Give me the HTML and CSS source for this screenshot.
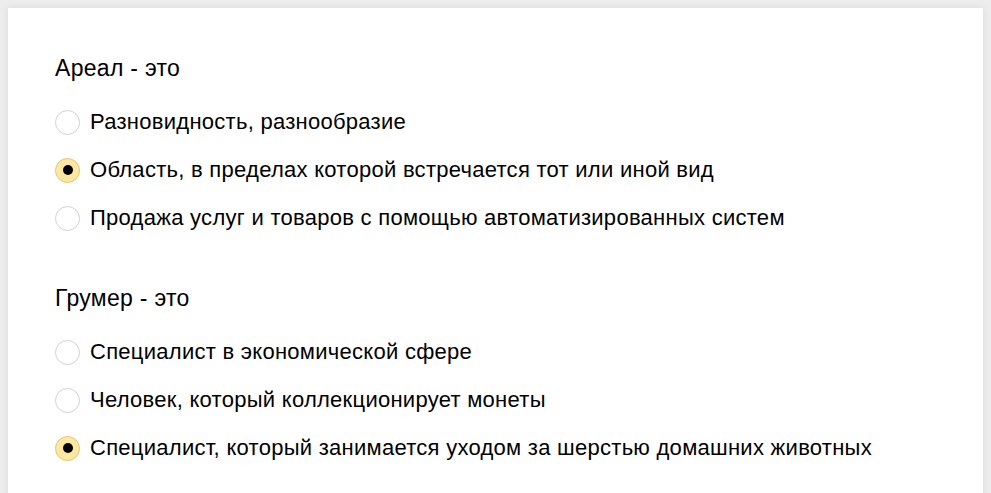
FILE: index.html
```html
<!DOCTYPE html>
<html lang="ru">
<head>
<meta charset="utf-8">
<link rel="stylesheet" href="styles.css">
</head>
<body>
<div class="card">
  <div class="group">
    <div class="question">Ареал - это</div>
    <label class="option"><span class="radio"></span><span class="text">Разновидность, разнообразие</span></label>
    <label class="option"><span class="radio checked"></span><span class="text">Область, в пределах которой встречается тот или иной вид</span></label>
    <label class="option"><span class="radio"></span><span class="text">Продажа услуг и товаров с помощью автоматизированных систем</span></label>
  </div>
  <div class="group">
    <div class="question">Грумер - это</div>
    <label class="option"><span class="radio"></span><span class="text">Специалист в экономической сфере</span></label>
    <label class="option"><span class="radio"></span><span class="text">Человек, который коллекционирует монеты</span></label>
    <label class="option"><span class="radio checked"></span><span class="text">Специалист, который занимается уходом за шерстью домашних животных</span></label>
  </div>
</div>
</body>
</html>
```

FILE: styles.css
```css
html, body {
  margin: 0;
  padding: 0;
}
body {
  background: #ededed;
  padding: 8px;
  font-family: "Liberation Sans", Arial, sans-serif;
  font-size: 22px;
  color: #000;
  height: 493px;
  box-sizing: border-box;
  overflow: hidden;
}
.card {
  background: #fff;
  box-shadow: 0 0 8px rgba(0, 0, 0, 0.08);
  padding: 48px 47px 40px;
  min-height: 600px;
  display: flex;
  flex-direction: column;
  gap: 44px;
}
.group {
  display: flex;
  flex-direction: column;
}
.question {
  font-size: 23px;
  letter-spacing: 0.3px;
  line-height: 24px;
  margin-bottom: 18px;
}
.option {
  display: flex;
  align-items: center;
  height: 48px;
  line-height: 24px;
  letter-spacing: 0.27px;
}
.radio {
  box-sizing: border-box;
  width: 25px;
  height: 25px;
  border-radius: 50%;
  border: 1px solid #d2d2d2;
  background: #fff;
  margin-right: 10px;
  flex: none;
  display: flex;
  align-items: center;
  justify-content: center;
}
.radio.checked {
  background: #fde8a2;
  border-color: #e3c674;
}
.radio.checked::after {
  content: "";
  width: 10px;
  height: 10px;
  border-radius: 50%;
  background: #000;
}
```
